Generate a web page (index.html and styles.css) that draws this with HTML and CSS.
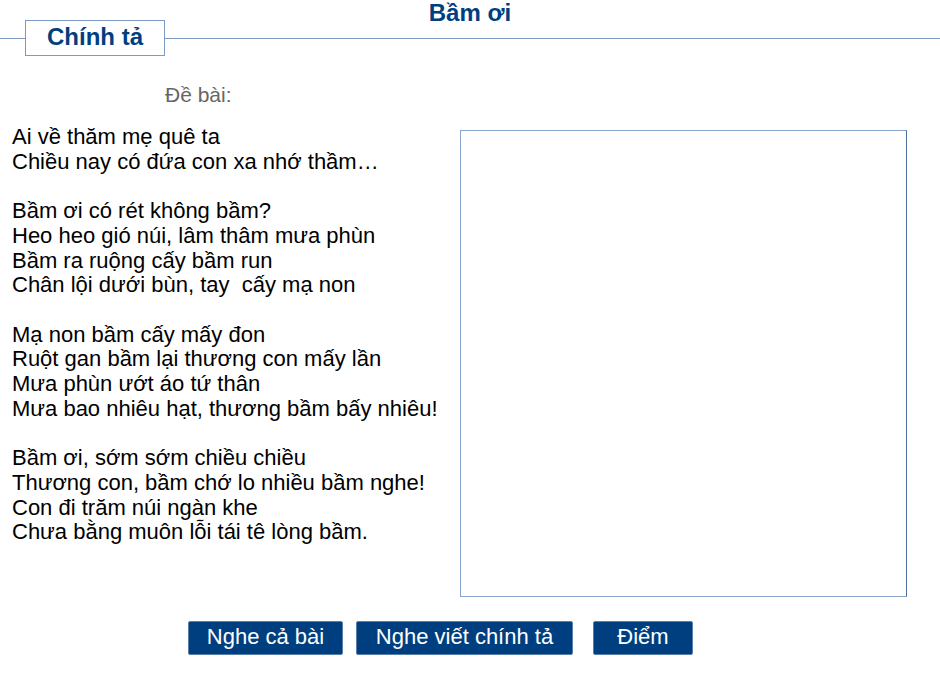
FILE: index.html
```html
<!DOCTYPE html>
<html lang="vi">
<head>
    <meta charset="UTF-8">
    <meta name="viewport" content="width=device-width, initial-scale=1.0">
    <title>Chính tả - Bầm ơi</title>
    <link rel="stylesheet" href="styles.css">
</head>
<body>
    <div class="header">
        <h1 class="title">Bầm ơi</h1>
        <div class="tab-row">
            <div class="tab">Chính tả</div>
        </div>
    </div>
    <div class="label">Đề bài:</div>
    <div class="content">
        <div class="poem">
            <p>Ai về thăm mẹ quê ta<br>Chiều nay có đứa con xa nhớ thầm…</p>
            <p>Bầm ơi có rét không bầm?<br>Heo heo gió núi, lâm thâm mưa phùn<br>Bầm ra ruộng cấy bầm run<br>Chân lội dưới bùn, tay&nbsp; cấy mạ non</p>
            <p>Mạ non bầm cấy mấy đon<br>Ruột gan bầm lại thương con mấy lần<br>Mưa phùn ướt áo tứ thân<br>Mưa bao nhiêu hạt, thương bầm bấy nhiêu!</p>
            <p>Bầm ơi, sớm sớm chiều chiều<br>Thương con, bầm chớ lo nhiều bầm nghe!<br>Con đi trăm núi ngàn khe<br>Chưa bằng muôn lỗi tái tê lòng bầm.</p>
        </div>
        <textarea class="answer"></textarea>
    </div>
    <div class="buttons">
        <button class="btn btn-all">Nghe cả bài</button>
        <button class="btn btn-dictate">Nghe viết chính tả</button>
        <button class="btn btn-score">Điểm</button>
    </div>
</body>
</html>
```

FILE: styles.css
```css
*{
    margin: 0;
    padding: 0;
    box-sizing: border-box;
}
body{
    width: 940px;
    height: 676px;
    background-color: #fff;
    font-family: "Liberation Sans", Arial, sans-serif;
    color: #000;
    overflow: hidden;
}
.header{
    height: 56px;
}
.title{
    height: 26px;
    line-height: 26px;
    text-align: center;
    font-size: 24px;
    font-weight: bold;
    color: #003f7f;
}
.tab-row{
    display: flex;
    align-items: center;
    margin-top: -6px;
}
/* đường kẻ hai bên tab */
.tab-row::before,
.tab-row::after{
    content: "";
    height: 1px;
    background-color: #7b9bc5;
}
.tab-row::before{
    width: 25px;
}
.tab-row::after{
    flex: 1;
}
.tab{
    width: 140px;
    height: 36px;
    line-height: 31px;
    border: 1px solid #7b9bc5;
    text-align: center;
    font-size: 24px;
    font-weight: bold;
    color: #003f7f;
}
.label{
    margin-top: 27px;
    padding-left: 165px;
    font-size: 21px;
    line-height: 24px;
    color: #666;
}
.content{
    display: flex;
    margin-top: 18px;
}
.poem{
    width: 460px;
    padding-left: 12px;
    font-size: 22px;
    line-height: 24.7px;
    white-space: nowrap;
}
.poem p{
    margin-bottom: 24.7px;
}
.answer{
    width: 447px;
    height: 467px;
    margin-top: 5px;
    border: 1px solid #86a5cc;
    border-right-color: #4d6f9a;
    resize: none;
    outline: none;
}
.buttons{
    display: flex;
    gap: 13px;
    padding-left: 188px;
    margin-top: 24px;
}
.btn{
    height: 34px;
    padding: 0 0 3px;
    border: 1px solid #5a7fa8;
    border-radius: 2px;
    background-color: #003f7f;
    color: #fff;
    font-family: "Liberation Sans", Arial, sans-serif;
    font-size: 22px;
    cursor: pointer;
}
.btn-all{
    width: 155px;
}
.btn-dictate{
    width: 217px;
}
.btn-score{
    width: 100px;
    margin-left: 7px;
}
```
